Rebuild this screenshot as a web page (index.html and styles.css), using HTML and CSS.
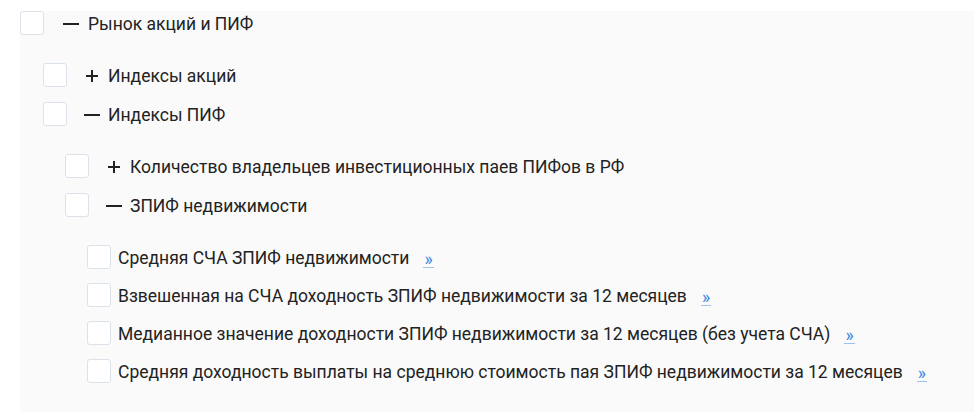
FILE: index.html
```html
<!DOCTYPE html>
<html lang="ru">
<head>
    <meta charset="UTF-8">
    <title>Индексы</title>
    <link rel="stylesheet" href="styles.css">
</head>
<body>
<div class="tree">
    <ul class="level">
        <li>
            <div class="node">
                <span class="check"></span>
                <span class="toggle minus"></span>
                <span class="title">Рынок акций и ПИФ</span>
            </div>
            <ul class="level sub">
                <li>
                    <div class="node">
                        <span class="check"></span>
                        <span class="toggle plus"></span>
                        <span class="title">Индексы акций</span>
                    </div>
                </li>
                <li>
                    <div class="node">
                        <span class="check"></span>
                        <span class="toggle minus"></span>
                        <span class="title">Индексы ПИФ</span>
                    </div>
                    <ul class="level sub">
                        <li>
                            <div class="node">
                                <span class="check"></span>
                                <span class="toggle plus"></span>
                                <span class="title">Количество владельцев инвестиционных паев ПИФов в РФ</span>
                            </div>
                        </li>
                        <li>
                            <div class="node">
                                <span class="check"></span>
                                <span class="toggle minus"></span>
                                <span class="title">ЗПИФ недвижимости</span>
                            </div>
                            <ul class="level sub leaves">
                                <li>
                                    <div class="node">
                                        <span class="check"></span>
                                        <span class="title">Средняя СЧА ЗПИФ недвижимости</span>
                                        <a class="more" href="#">»</a>
                                    </div>
                                </li>
                                <li>
                                    <div class="node">
                                        <span class="check"></span>
                                        <span class="title">Взвешенная на СЧА доходность ЗПИФ недвижимости за 12 месяцев</span>
                                        <a class="more" href="#">»</a>
                                    </div>
                                </li>
                                <li>
                                    <div class="node">
                                        <span class="check"></span>
                                        <span class="title">Медианное значение доходности ЗПИФ недвижимости за 12 месяцев (без учета СЧА)</span>
                                        <a class="more" href="#">»</a>
                                    </div>
                                </li>
                                <li>
                                    <div class="node">
                                        <span class="check"></span>
                                        <span class="title">Средняя доходность выплаты на среднюю стоимость пая ЗПИФ недвижимости за 12 месяцев</span>
                                        <a class="more" href="#">»</a>
                                    </div>
                                </li>
                            </ul>
                        </li>
                    </ul>
                </li>
            </ul>
        </li>
    </ul>
</div>
</body>
</html>
```

FILE: styles.css
```css
html, body {
    margin: 0;
    padding: 0;
    height: 100%;
    background: #fff;
}

body {
    font-family: Roboto, "Noto Sans", sans-serif;
    font-size: 17.5px;
    color: #222;
}

.tree {
    margin: 11px 0 0 20px;
    min-height: calc(100% - 11px);
    background-color: #fafafa;
}

.level {
    list-style: none;
    margin: 0;
    padding: 0;
}

.sub {
    padding: 13px 0 0 23px;
}

.sub .sub {
    padding-left: 22px;
}

.node {
    display: flex;
    align-items: center;
    height: 24px;
    margin-bottom: 15px;
}

.leaves .node {
    margin-bottom: 14px;
}

.check {
    flex: none;
    width: 24px;
    height: 24px;
    box-sizing: border-box;
    border: 1px solid #dbe2ea;
    border-radius: 3px;
    background-color: #fff;
}

.toggle {
    flex: none;
    position: relative;
    width: 16px;
    height: 16px;
    margin: 2px 9px 0 19px;
}

.sub .toggle {
    margin-left: 17px;
    margin-right: 8px;
}

.toggle::before,
.toggle::after {
    content: "";
    position: absolute;
    background-color: #222;
}

.minus::before {
    left: 0;
    right: 0;
    top: 7px;
    height: 2px;
}

.minus::after {
    display: none;
}

.plus::before {
    left: 2px;
    right: 2px;
    top: 7px;
    height: 2px;
}

.plus::after {
    top: 2px;
    bottom: 2px;
    left: 7px;
    width: 2px;
}

.title {
    line-height: 24px;
    padding-top: 2px;
    white-space: nowrap;
}

.leaves .title {
    margin-left: 7px;
}

.more {
    margin-left: 14px;
    color: #3b86e0;
    text-decoration: none;
    border-bottom: 1px solid #9cc3f0;
    line-height: 16px;
    padding: 0 1px;
    margin-top: 5px;
}
```
